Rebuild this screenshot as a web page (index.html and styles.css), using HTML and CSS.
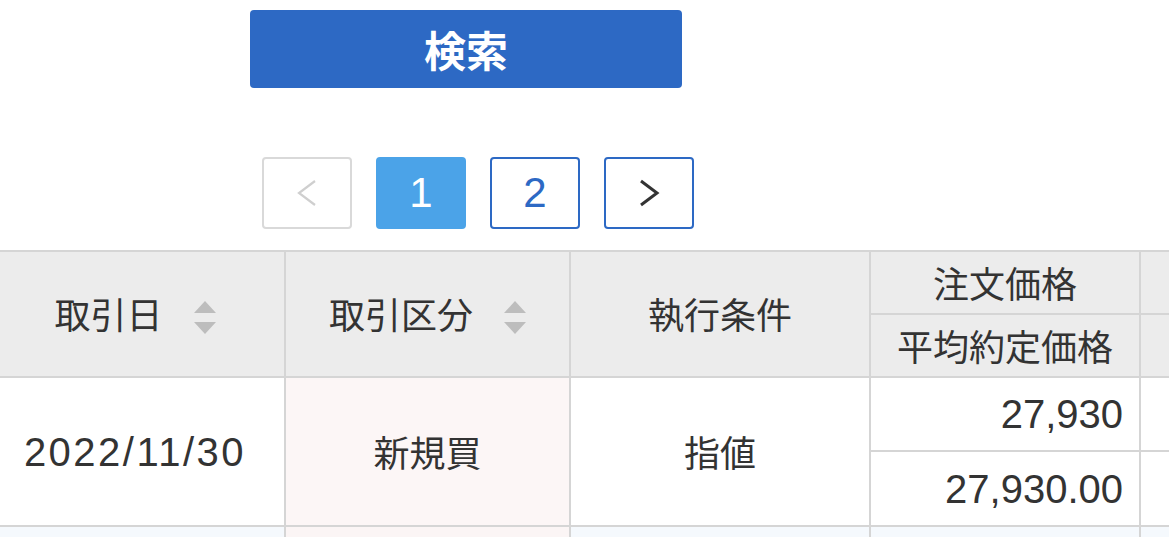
FILE: index.html
```html
<!DOCTYPE html>
<html lang="ja">
<head>
    <meta charset="UTF-8">
    <meta name="viewport" content="width=device-width, initial-scale=1.0">
    <title>取引履歴</title>
    <link rel="stylesheet" href="styles.css">
</head>
<body>
    <div class="search-area">
        <button class="search-btn" type="button">検索</button>
    </div>

    <nav class="pager">
        <span class="page-btn disabled">
            <svg width="22" height="28" viewBox="0 0 22 28"><polyline points="19,2 3,14 19,26" fill="none" stroke="#cfcfcf" stroke-width="2.2"/></svg>
        </span>
        <span class="page-btn current">1</span>
        <a class="page-btn" href="#">2</a>
        <a class="page-btn" href="#">
            <svg width="22" height="28" viewBox="0 0 22 28"><polyline points="3,2 19,14 3,26" fill="none" stroke="#333" stroke-width="3"/></svg>
        </a>
    </nav>

    <div class="table-wrap">
        <table class="trade-table">
            <colgroup>
                <col class="col-date">
                <col class="col-type">
                <col class="col-cond">
                <col class="col-price">
                <col class="col-qty">
            </colgroup>
            <thead>
                <tr class="head-top">
                    <th rowspan="2">
                        <span class="sortable">取引日<svg class="sort-icon" width="22" height="34" viewBox="0 0 22 34"><polygon points="11,0 22,12 0,12" fill="#bdbdbd"/><polygon points="0,21 22,21 11,33" fill="#bdbdbd"/></svg></span>
                    </th>
                    <th rowspan="2">
                        <span class="sortable">取引区分<svg class="sort-icon" width="22" height="34" viewBox="0 0 22 34"><polygon points="11,0 22,12 0,12" fill="#bdbdbd"/><polygon points="0,21 22,21 11,33" fill="#bdbdbd"/></svg></span>
                    </th>
                    <th rowspan="2">執行条件</th>
                    <th>注文価格</th>
                    <th></th>
                </tr>
                <tr class="head-bottom">
                    <th>平均約定価格</th>
                    <th></th>
                </tr>
            </thead>
            <tbody>
                <tr class="row-top">
                    <td rowspan="2" class="num date">2022/11/30</td>
                    <td rowspan="2" class="type-cell">新規買</td>
                    <td rowspan="2">指値</td>
                    <td class="num right">27,930</td>
                    <td></td>
                </tr>
                <tr class="row-bottom">
                    <td class="num right">27,930.00</td>
                    <td></td>
                </tr>
                <tr class="row-top even">
                    <td rowspan="2"></td>
                    <td rowspan="2" class="type-cell"></td>
                    <td rowspan="2"></td>
                    <td></td>
                    <td></td>
                </tr>
                <tr class="row-bottom even">
                    <td></td>
                    <td></td>
                </tr>
            </tbody>
        </table>
    </div>
</body>
</html>
```

FILE: styles.css
```css
body {
    margin: 0;
    padding: 0;
    background-color: #fff;
    color: #333;
    font-family: "Noto Sans CJK JP", sans-serif;
    overflow: hidden;
}

.search-area {
    padding-top: 10px;
    padding-left: 250px;
}

.search-btn {
    width: 432px;
    height: 78px;
    background-color: #2d69c4;
    color: #fff;
    border: none;
    border-radius: 4px;
    font-family: "Noto Sans CJK JP", sans-serif;
    font-size: 42px;
    font-weight: bold;
    line-height: 1;
    padding: 0;
    cursor: pointer;
}

.pager {
    display: flex;
    gap: 24px;
    margin-top: 69px;
    padding-left: 262px;
}

.page-btn {
    box-sizing: border-box;
    width: 90px;
    height: 72px;
    display: flex;
    align-items: center;
    justify-content: center;
    border: 2px solid #2d69c4;
    border-radius: 4px;
    color: #2d69c4;
    font-family: "Liberation Sans", Arial, sans-serif;
    font-size: 42px;
    text-decoration: none;
}

.page-btn.current {
    background-color: #4ba3e8;
    border-color: #4ba3e8;
    color: #fff;
}

.page-btn.disabled {
    border-color: #d9d9d9;
}

.table-wrap {
    margin-top: 21px;
    margin-left: -16px;
}

.trade-table {
    border-collapse: collapse;
    table-layout: fixed;
    width: 1425px;
}

.col-date { width: 300px; }
.col-type { width: 285px; }
.col-cond { width: 300px; }
.col-price { width: 270px; }
.col-qty { width: 270px; }

.trade-table th,
.trade-table td {
    border: 2px solid #d5d5d5;
    font-size: 36px;
    font-weight: normal;
    line-height: 1.2;
    text-align: center;
    padding: 0 16px;
    color: #333;
}

.trade-table th {
    background-color: #ececec;
}

.head-top th,
.head-bottom th {
    height: 61px;
}

.row-top td {
    height: 72px;
}

.row-bottom td {
    height: 73px;
}

.sortable {
    display: inline-flex;
    align-items: center;
}

.sort-icon {
    margin-left: 31px;
    margin-top: 8px;
}

.num {
    font-family: "Liberation Sans", Arial, sans-serif;
    font-size: 40px !important;
}

.date {
    letter-spacing: 2.5px;
}

.right {
    text-align: right !important;
}

.type-cell {
    background-color: #fcf6f6;
}

.even td {
    background-color: #f5f9fd;
}

.even td.type-cell {
    background-color: #fbf5f5;
}
```
